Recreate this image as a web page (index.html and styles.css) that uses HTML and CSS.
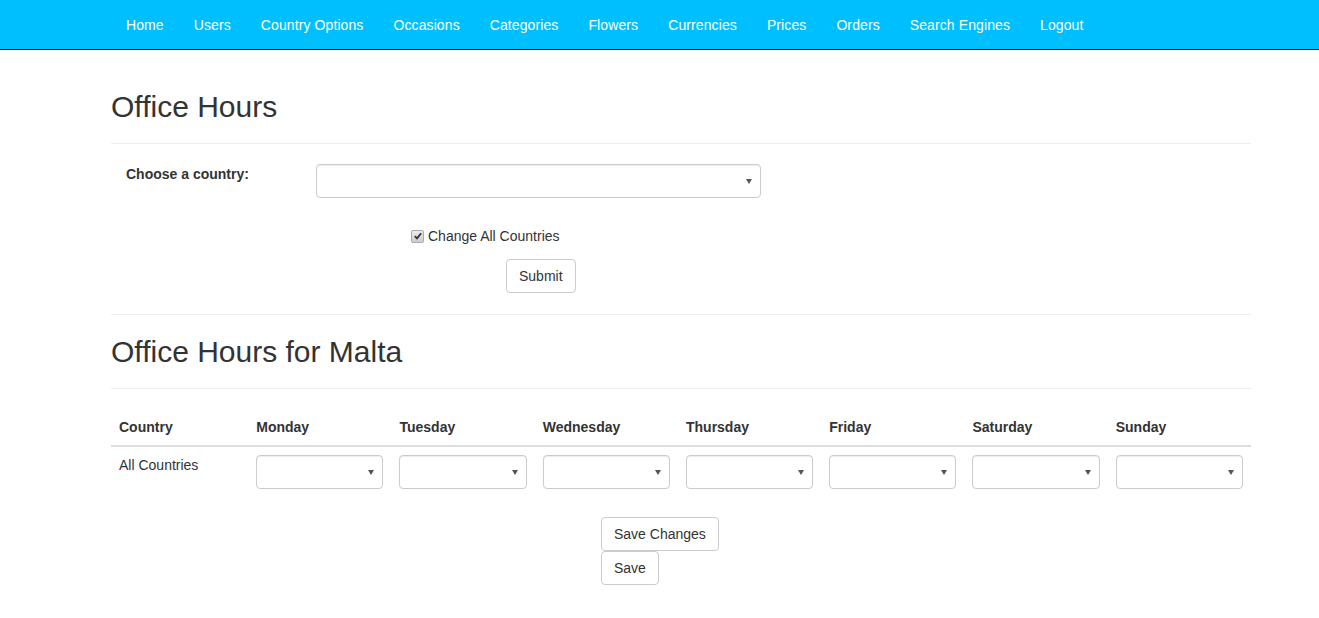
FILE: index.html
```html
<!DOCTYPE html>
<html lang="en">
<head>
    <meta charset="UTF-8">
    <meta name="viewport" content="width=device-width, initial-scale=1.0">
    <title>Office Hours</title>
    <link rel="stylesheet" href="styles.css">
</head>
<body>
    <nav class="navbar">
        <ul class="nav">
            <li><a href="#">Home</a></li>
            <li><a href="#">Users</a></li>
            <li><a href="#">Country Options</a></li>
            <li><a href="#">Occasions</a></li>
            <li><a href="#">Categories</a></li>
            <li><a href="#">Flowers</a></li>
            <li><a href="#">Currencies</a></li>
            <li><a href="#">Prices</a></li>
            <li><a href="#">Orders</a></li>
            <li><a href="#">Search Engines</a></li>
            <li><a href="#">Logout</a></li>
        </ul>
    </nav>

    <div class="container">
        <div class="page-header">
            <h2>Office Hours</h2>
        </div>

        <!-- country chooser -->
        <form class="country-form">
            <div class="form-row">
                <label class="form-label">Choose a country:</label>
                <span class="select-wrap country-select">
                    <select class="form-control"><option></option></select>
                </span>
            </div>
            <div class="check-row">
                <label class="check">
                    <span class="check-box">
                        <svg width="8" height="8" viewBox="0 0 8 8"><path d="M0.8 4.2 L3 6.4 L7.2 1.2" fill="none" stroke="#333" stroke-width="1.8"/></svg>
                    </span>
                    Change All Countries
                </label>
            </div>
            <div class="submit-row">
                <button type="submit" class="btn">Submit</button>
            </div>
        </form>

        <hr>

        <div class="page-header">
            <h2>Office Hours for Malta</h2>
        </div>

        <table class="table">
            <thead>
                <tr>
                    <th class="col-country">Country</th>
                    <th>Monday</th>
                    <th>Tuesday</th>
                    <th>Wednesday</th>
                    <th>Thursday</th>
                    <th>Friday</th>
                    <th>Saturday</th>
                    <th>Sunday</th>
                </tr>
            </thead>
            <tbody>
                <tr>
                    <td>All Countries</td>
                    <td><span class="select-wrap"><select class="form-control"><option></option></select></span></td>
                    <td><span class="select-wrap"><select class="form-control"><option></option></select></span></td>
                    <td><span class="select-wrap"><select class="form-control"><option></option></select></span></td>
                    <td><span class="select-wrap"><select class="form-control"><option></option></select></span></td>
                    <td><span class="select-wrap"><select class="form-control"><option></option></select></span></td>
                    <td><span class="select-wrap"><select class="form-control"><option></option></select></span></td>
                    <td><span class="select-wrap"><select class="form-control"><option></option></select></span></td>
                </tr>
            </tbody>
        </table>

        <div class="save-buttons">
            <button class="btn">Save Changes</button>
            <button class="btn">Save</button>
        </div>
    </div>
</body>
</html>
```

FILE: styles.css
```css
body {
    font-family: "Liberation Sans", Arial, sans-serif;
    font-size: 14px;
    line-height: 20px;
    color: #333;
    margin: 0;
    padding: 0;
    background-color: #fff;
}

.navbar {
    height: 49px;
    background-color: #00bfff;
    border-bottom: 1px solid #000;
}

.nav {
    list-style: none;
    margin: 0;
    padding: 0 0 0 111px;
    display: flex;
}

.nav a {
    display: block;
    padding: 15px 15px 14px;
    color: #fff;
    text-decoration: none;
    letter-spacing: 0.1px;
}

.container {
    width: 1140px;
    margin-left: 111px;
}

.page-header {
    margin: 40px 0 20px;
    padding-bottom: 10px;
    border-bottom: 1px solid #eee;
}

hr + .page-header {
    margin-top: 19px;
}

.page-header h2 {
    margin: 0 0 10px;
    font-size: 30px;
    font-weight: 500;
    line-height: 33px;
}

.form-row {
    display: flex;
    padding-left: 15px;
}

.form-label {
    width: 190px;
    font-weight: bold;
    font-size: 14px;
}

.select-wrap {
    position: relative;
    display: block;
}

.select-wrap::after {
    content: "";
    position: absolute;
    right: 9px;
    top: 15px;
    border-left: 3px solid transparent;
    border-right: 3px solid transparent;
    border-top: 5px solid #555;
    pointer-events: none;
}

.country-select {
    width: 445px;
}

.form-control {
    display: block;
    width: 100%;
    height: 34px;
    padding: 6px 12px;
    font: inherit;
    color: #555;
    background-color: #fff;
    border: 1px solid #ccc;
    border-radius: 4px;
    box-shadow: inset 0 1px 1px rgba(0, 0, 0, 0.075);
    -webkit-appearance: none;
    appearance: none;
    box-sizing: border-box;
}

.check-row {
    margin-top: 27px;
    padding-left: 300px;
}

.check {
    display: inline-flex;
    align-items: center;
}

.check-box {
    width: 11px;
    height: 11px;
    margin-right: 4px;
    border: 1px solid #aaa;
    border-radius: 2px;
    background: linear-gradient(#eee, #ccc);
    display: flex;
    align-items: center;
    justify-content: center;
}

.submit-row {
    margin-top: 13px;
    padding-left: 395px;
}

.btn {
    display: inline-block;
    padding: 6px 12px;
    font: inherit;
    color: #333;
    background-color: #fff;
    border: 1px solid #ccc;
    border-radius: 4px;
    cursor: pointer;
    line-height: 20px;
}

hr {
    margin: 21px 0 20px;
    border: 0;
    border-top: 1px solid #eee;
}

.table {
    width: 100%;
    border-collapse: collapse;
    margin-bottom: 20px;
}

.table th {
    text-align: left;
    padding: 8px;
    border-bottom: 2px solid #ddd;
    width: 127px;
}

.table th.col-country {
    width: 121px;
}

.table td {
    padding: 8px;
    vertical-align: top;
}

.save-buttons {
    padding-left: 490px;
    display: flex;
    flex-direction: column;
    align-items: flex-start;
}
```
